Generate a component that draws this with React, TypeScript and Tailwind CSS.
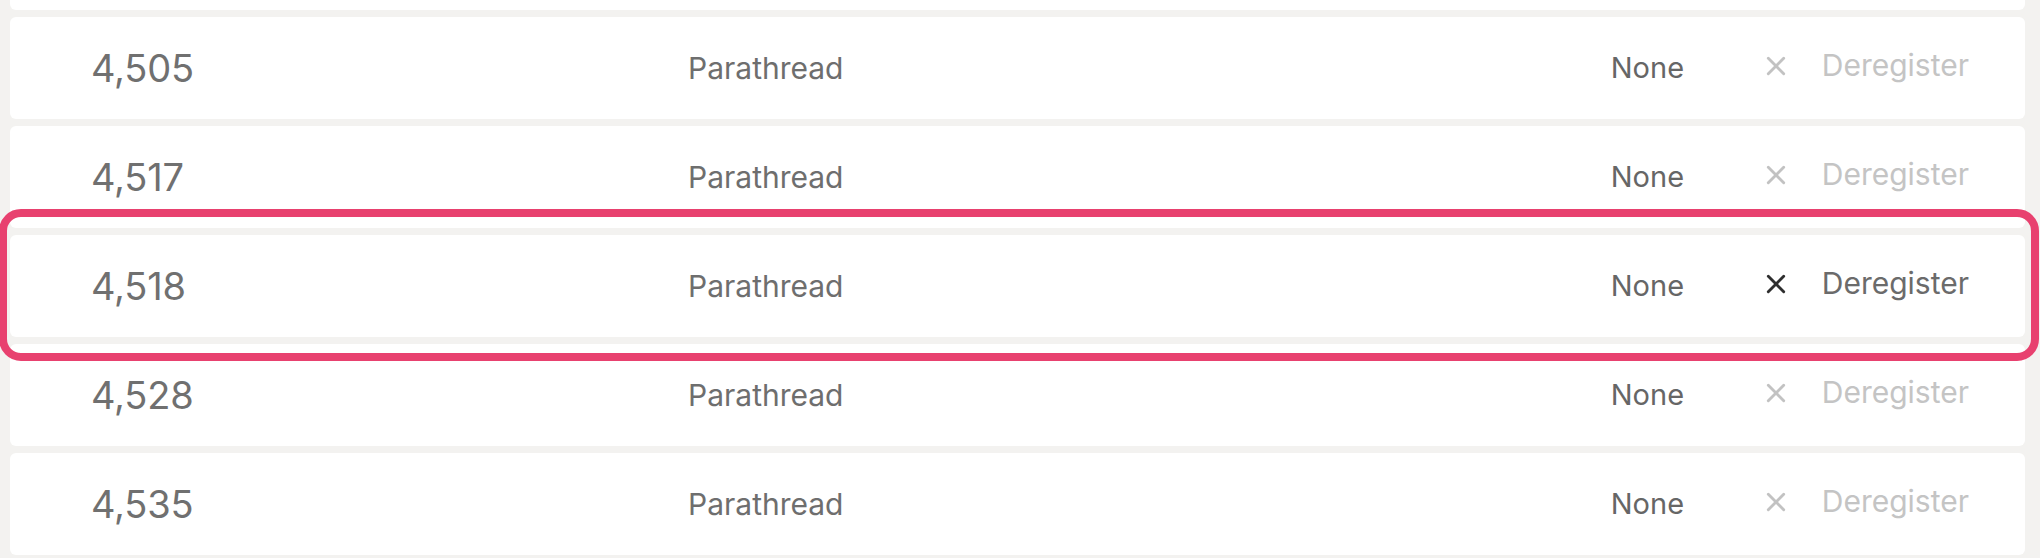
import React from 'react';

interface ParaRow {
  id: string;
  kind: string;
  lease: string;
  active?: boolean;
  offscreen?: boolean;
}

const rows: ParaRow[] = [
  { id: '4,502', kind: 'Parathread', lease: 'None', offscreen: true },
  { id: '4,505', kind: 'Parathread', lease: 'None' },
  { id: '4,517', kind: 'Parathread', lease: 'None' },
  { id: '4,518', kind: 'Parathread', lease: 'None', active: true },
  { id: '4,528', kind: 'Parathread', lease: 'None' },
  { id: '4,535', kind: 'Parathread', lease: 'None' },
];

function CrossIcon({ className }: { className: string }) {
  return (
    <svg viewBox="0 0 20 20" className={className} fill="none" stroke="currentColor" strokeWidth={2.6} strokeLinecap="round">
      <path d="M3 3 17 17" />
      <path d="M17 3 3 17" />
    </svg>
  );
}

export default function App() {
  return (
    <div className="w-[2040px] h-[558px] overflow-hidden bg-[#f3f2f0] font-['Inter',sans-serif]">
      <div className="flex flex-col gap-[7px] pl-[10px] pr-[15px] -mt-[92px]">
        {rows.map((row) => (
          <div key={row.id} className="relative h-[102px] bg-white rounded-[6px] flex items-center">
            {row.active && (
              <div className="absolute z-10 -top-[26px] -bottom-[24px] -left-[11px] -right-[14px] border-[8px] border-[#e8416f] rounded-[22px] pointer-events-none" />
            )}
            {/* row above the fold: scrolled out, only its bottom edge shows */}
            {!row.offscreen && (
              <>
                <span className="w-[678px] pl-[81px] text-[38px] text-[#707070] tracking-[-0.2px]">{row.id}</span>
                <span className="flex-1 text-[30px] text-[#6e6e6e]">{row.kind}</span>
                <span className="w-[154px] text-[29px] text-[#666666]">{row.lease}</span>
                <div className="flex items-center pb-[5px] pr-[56px]">
                  <CrossIcon className={`w-[22px] h-[22px] ${row.active ? 'text-[#2e2e2e]' : 'text-[#c2c2c2]'}`} />
                  <span className={`ml-[35px] text-[30px] ${row.active ? 'text-[#6b6b6b]' : 'text-[#c4c4c4]'}`}>Deregister</span>
                </div>
              </>
            )}
          </div>
        ))}
      </div>
    </div>
  );
}
